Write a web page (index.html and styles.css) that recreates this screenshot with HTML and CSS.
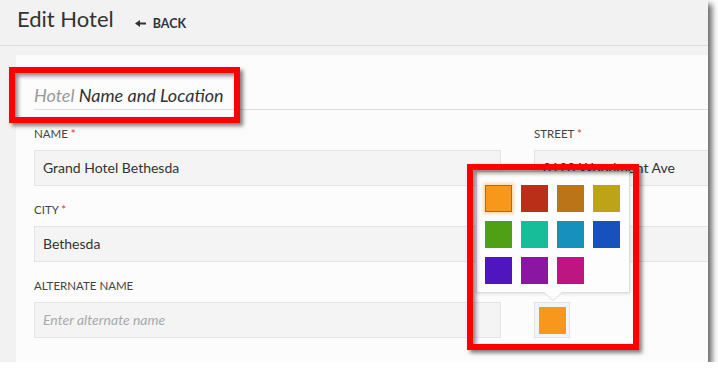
FILE: index.html
```html
<!DOCTYPE html>
<html lang="en">
<head>
    <meta charset="UTF-8">
    <meta name="viewport" content="width=device-width, initial-scale=1.0">
    <title>Edit Hotel</title>
    <link rel="stylesheet" href="styles.css">
</head>
<body>
    <div class="screen">
        <header class="topbar">
            <h1>Edit Hotel</h1>
            <a class="back" href="#">
                <svg width="11" height="7" viewBox="0 0 11 7"><polygon points="0,3.5 5,0 5,2.5 11,2.5 11,4.5 5,4.5 5,7" fill="#333"/></svg>
                BACK
            </a>
        </header>
        <main class="main">
            <section class="panel">
                <h2 class="panel-title"><span class="muted">Hotel</span> Name and Location</h2>
                <div class="form-grid">
                    <div class="field">
                        <label>NAME <span class="req">*</span></label>
                        <input type="text" value="Grand Hotel Bethesda">
                    </div>
                    <div class="field">
                        <label>STREET <span class="req">*</span></label>
                        <input type="text" value="8120 Woodmont Ave">
                    </div>
                    <div class="field">
                        <label>CITY <span class="req">*</span></label>
                        <input type="text" value="Bethesda">
                    </div>
                    <div class="field">
                        <label>STATE <span class="req">*</span></label>
                        <input type="text" value="MD">
                    </div>
                    <div class="field">
                        <label>ALTERNATE NAME</label>
                        <input type="text" placeholder="Enter alternate name">
                    </div>
                    <div class="field">
                        <label>COLOR</label>
                        <div class="swatch-button"><span class="swatch orange"></span></div>
                    </div>
                </div>
            </section>
        </main>

        <div class="popover">
            <span class="swatch orange selected"></span>
            <span class="swatch red"></span>
            <span class="swatch brown"></span>
            <span class="swatch olive"></span>
            <span class="swatch green"></span>
            <span class="swatch teal"></span>
            <span class="swatch sky"></span>
            <span class="swatch blue"></span>
            <span class="swatch indigo"></span>
            <span class="swatch purple"></span>
            <span class="swatch magenta"></span>
        </div>

        <div class="callout callout-title"></div>
        <div class="callout callout-picker"></div>
    </div>
</body>
</html>
```

FILE: styles.css
```css
body {
    margin: 0;
    background-color: white;
    font-family: Lato, "Open Sans", sans-serif;
    color: #333;
}
.screen {
    position: relative;
    width: 708px;
    height: 362px;
    overflow: hidden;
    background-color: #f2f2f2;
    box-shadow: 4px 4px 6px rgba(0, 0, 0, 0.6);
    display: flex;
    flex-direction: column;
}
.topbar {
    height: 46px;
    box-sizing: border-box;
    padding: 6px 0 0 17px;
    border-bottom: 1px solid #dcdcdc;
    display: flex;
    align-items: baseline;
    gap: 21px;
}
.topbar h1 {
    margin: 0;
    font-size: 22px;
    font-weight: normal;
    line-height: 26px;
    color: #333;
}
.back {
    display: flex;
    align-items: center;
    gap: 7px;
    color: #333;
    text-decoration: none;
    font-size: 12.5px;
    font-weight: bold;
}
.main {
    flex: 1;
    padding: 9px 0 0 16px;
}
.panel {
    height: 100%;
    box-sizing: border-box;
    background-color: #fcfcfc;
    padding: 28px 0 0 18px;
}
.panel-title {
    margin: 0 0 16px 0;
    padding-bottom: 2px;
    border-bottom: 1px solid #dddddd;
    font-size: 18px;
    font-weight: normal;
    font-style: italic;
    line-height: 24px;
    color: #333;
}
.muted {
    color: #9a9a9a;
}
.form-grid {
    display: grid;
    grid-template-columns: 467px 467px;
    column-gap: 33px;
}
.field {
    margin-bottom: 16px;
}
.field label {
    display: block;
    font-size: 11.5px;
    line-height: 16px;
    margin-bottom: 8px;
    color: #444;
}
.req {
    color: #e3342f;
}
.field input {
    display: block;
    width: 100%;
    height: 36px;
    box-sizing: border-box;
    margin: 0;
    padding: 0 8px 2px 8px;
    border: 1px solid #e4e4e4;
    background-color: #f4f4f4;
    font-family: Lato, "Open Sans", sans-serif;
    font-size: 14px;
    color: #333;
    outline: none;
}
.field input::placeholder {
    color: #aaa;
    font-style: italic;
}
.swatch-button {
    width: 36px;
    height: 36px;
    box-sizing: border-box;
    padding: 4px;
    border: 1px solid #e4e4e4;
    background-color: #f4f4f4;
}
.swatch {
    display: block;
    width: 27px;
    height: 27px;
    box-sizing: border-box;
}
.swatch.selected {
    border: 1px solid #b8690f;
    box-shadow: 0 0 3px 2px rgba(247, 152, 29, 0.35);
}
.orange { background-color: #f7981d; }
.red { background-color: #b92f18; }
.brown { background-color: #bc7418; }
.olive { background-color: #bca318; }
.green { background-color: #4fa015; }
.teal { background-color: #16bd98; }
.sky { background-color: #1690bd; }
.blue { background-color: #1651bd; }
.indigo { background-color: #4f16bd; }
.purple { background-color: #8a16a2; }
.magenta { background-color: #bd1682; }

.popover {
    position: absolute;
    left: 476px;
    top: 171px;
    width: 154px;
    box-sizing: border-box;
    padding: 13px 8px 8px 8px;
    background-color: #fdfdfd;
    border: 1px solid #dddddd;
    box-shadow: 0 1px 3px rgba(0, 0, 0, 0.12);
    display: grid;
    grid-template-columns: repeat(4, 27px);
    gap: 9px;
}
.popover::before,
.popover::after {
    content: "";
    position: absolute;
    left: 66px;
    border-left: 10px solid transparent;
    border-right: 10px solid transparent;
}
.popover::before {
    top: 100%;
    border-top: 9px solid #dddddd;
}
.popover::after {
    top: calc(100% - 1px);
    border-top: 9px solid #fdfdfd;
}
.callout {
    position: absolute;
    box-sizing: border-box;
    border: 6px solid #ff0000;
    box-shadow: 3px 3px 4px rgba(0, 0, 0, 0.5), inset 3px 3px 4px rgba(0, 0, 0, 0.45);
}
.callout-title {
    left: 9px;
    top: 67px;
    width: 231px;
    height: 56px;
}
.callout-picker {
    left: 467px;
    top: 164px;
    width: 172px;
    height: 186px;
}
```
